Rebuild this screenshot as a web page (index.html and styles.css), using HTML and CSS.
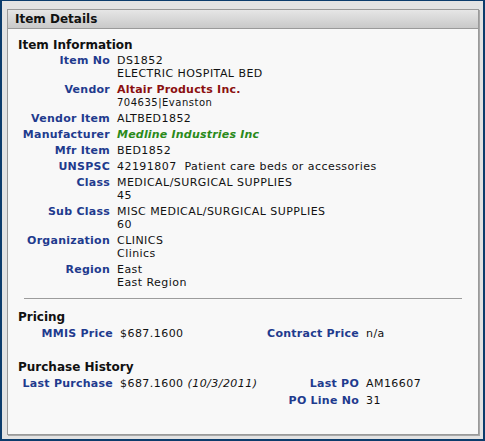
FILE: index.html
```html
<!DOCTYPE html>
<html>
<head>
<meta charset="utf-8">
<link rel="stylesheet" href="styles.css">
</head>
<body>
<div class="frame">
  <div class="panel">
    <div class="panel-head">Item Details</div>
    <div class="panel-body">
      <div class="section-title">Item Information</div>
      <div class="info">
        <div class="lbl">Item No</div>
        <div class="val">DS1852<br>ELECTRIC HOSPITAL BED</div>
        <div class="lbl">Vendor</div>
        <div class="val"><span class="vendor">Altair Products Inc.</span><br><span class="small">704635|Evanston</span></div>
        <div class="lbl">Vendor Item</div>
        <div class="val">ALTBED1852</div>
        <div class="lbl">Manufacturer</div>
        <div class="val"><span class="mfr">Medline Industries Inc</span></div>
        <div class="lbl">Mfr Item</div>
        <div class="val">BED1852</div>
        <div class="lbl">UNSPSC</div>
        <div class="val">42191807&nbsp; Patient care beds or accessories</div>
        <div class="lbl">Class</div>
        <div class="val">MEDICAL/SURGICAL SUPPLIES<br>45</div>
        <div class="lbl">Sub Class</div>
        <div class="val">MISC MEDICAL/SURGICAL SUPPLIES<br>60</div>
        <div class="lbl">Organization</div>
        <div class="val">CLINICS<br>Clinics</div>
        <div class="lbl">Region</div>
        <div class="val">East<br>East Region</div>
      </div>
      <div class="rule"></div>
      <div class="section-title pricing-title">Pricing</div>
      <div class="pairs">
        <div class="lbl">MMIS Price</div>
        <div class="val">$687.1600</div>
        <div class="lbl">Contract Price</div>
        <div class="val">n/a</div>
      </div>
      <div class="section-title history-title">Purchase History</div>
      <div class="pairs">
        <div class="lbl">Last Purchase</div>
        <div class="val">$687.1600 <i>(10/3/2011)</i></div>
        <div class="lbl">Last PO</div>
        <div class="val">AM16607</div>
        <div class="lbl"></div>
        <div class="val"></div>
        <div class="lbl">PO Line No</div>
        <div class="val">31</div>
      </div>
    </div>
  </div>
</div>
</body>
</html>
```

FILE: styles.css
```css
html, body {
  margin: 0;
  padding: 0;
}
body {
  font-family: "DejaVu Sans", Verdana, sans-serif;
  font-size: 11px;
  color: #111;
}
.frame {
  width: 485px;
  height: 441px;
  box-sizing: border-box;
  border: 2px solid #0c3c6c;
  border-top-width: 1px;
  background: #e3e3e3;
  padding: 8px 3px 4px 5px;
}
.panel {
  height: 426px;
  box-sizing: border-box;
  border: 1px solid #9a9a9a;
  box-shadow: 1px 1px 0 #a8a8a8;
  background: #f8f8f8;
  margin-right: 1px;
}
.panel-head {
  height: 19px;
  box-sizing: border-box;
  border-bottom: 1px solid #9a9a9a;
  background: linear-gradient(#e6e6e6, #c9c9c9);
  font-weight: bold;
  font-size: 12px;
  line-height: 18px;
  padding-left: 7px;
  color: #111;
}
.panel-body {
  padding: 9px 10px 0 10px;
}
.section-title {
  font-weight: bold;
  font-size: 12px;
  line-height: 14px;
  color: #111;
}
.info {
  display: grid;
  grid-template-columns: 92px auto;
  column-gap: 7px;
  row-gap: 3px;
  margin-top: 2px;
  line-height: 13px;
}
.lbl {
  text-align: right;
  font-weight: bold;
  color: #1f3b8e;
  letter-spacing: 0.25px;
}
.val {
  letter-spacing: 0.45px;
}
.vendor {
  color: #8b1010;
  font-weight: bold;
  letter-spacing: 0.2px;
}
.mfr {
  color: #2a8a1a;
  font-weight: bold;
  font-style: italic;
  letter-spacing: 0.2px;
}
.small {
  font-size: 10px;
  letter-spacing: 0.5px;
}
.rule {
  height: 1px;
  background: #9c9c9c;
  margin: 9px 6px 11px 6px;
}
.pairs {
  display: grid;
  grid-template-columns: 95px 140px 92px auto;
  column-gap: 7px;
  row-gap: 4px;
  line-height: 13px;
  margin-top: 3px;
}
.history-title {
  margin-top: 20px;
}
```
